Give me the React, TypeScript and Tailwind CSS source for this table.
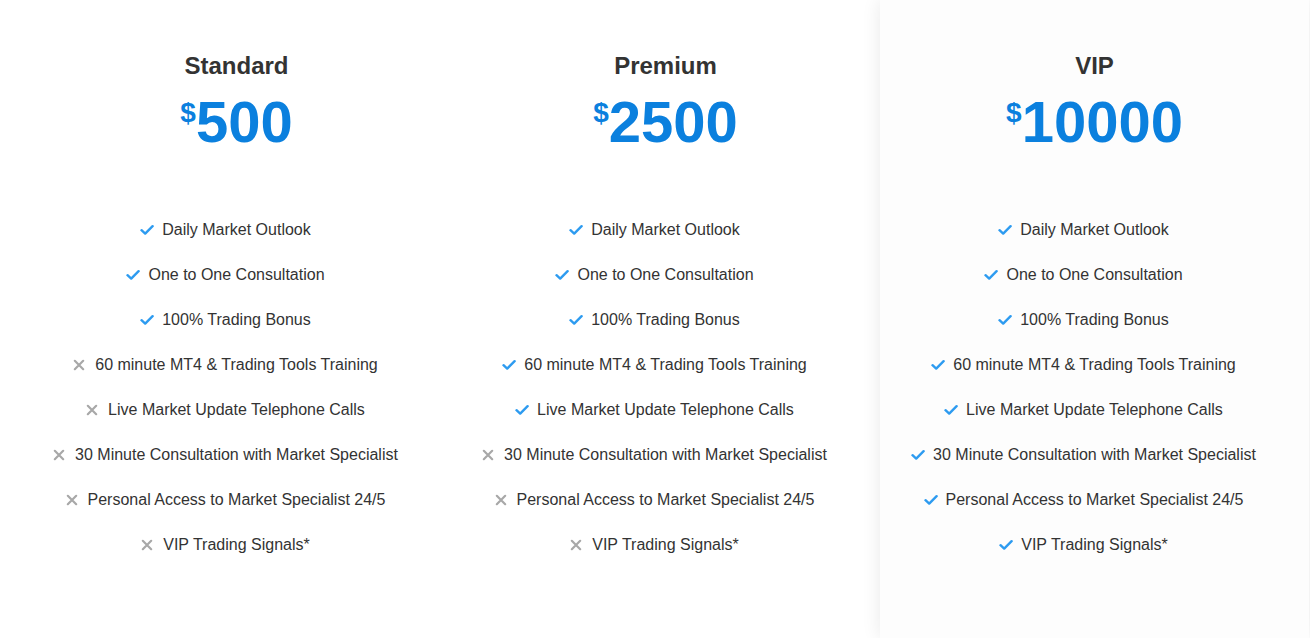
import React from "react";

const features = [
  "Daily Market Outlook",
  "One to One Consultation",
  "100% Trading Bonus",
  "60 minute MT4 & Trading Tools Training",
  "Live Market Update Telephone Calls",
  "30 Minute Consultation with Market Specialist",
  "Personal Access to Market Specialist 24/5",
  "VIP Trading Signals*",
];

const plans = [
  { name: "Standard", price: "500", included: 3, card: false },
  { name: "Premium", price: "2500", included: 5, card: false },
  { name: "VIP", price: "10000", included: 8, card: true },
];

function Check() {
  return (
    <svg width="14" height="14" viewBox="0 0 14 14" className="absolute left-[-22px] top-1/2 -translate-y-1/2">
      <path d="M1.5 7.2 L5.2 10.6 L12.6 3.2" fill="none" stroke="#2d9bf0" strokeWidth="2.4" strokeLinecap="round" strokeLinejoin="round" />
    </svg>
  );
}

function Cross() {
  return (
    <svg width="14" height="14" viewBox="0 0 14 14" className="absolute left-[-23px] top-1/2 -translate-y-1/2">
      <path d="M2.8 2.8 L11.2 11.2 M11.2 2.8 L2.8 11.2" fill="none" stroke="#a8a8a8" strokeWidth="2.2" strokeLinecap="round" />
    </svg>
  );
}

function Plan({ name, price, included, card }: { name: string; price: string; included: number; card: boolean }) {
  return (
    <div
      className={
        "w-[429px] h-[638px] flex flex-col items-center " +
        (card ? "bg-[#fdfdfd] shadow-[0_0_18px_rgba(0,0,0,0.09)]" : "")
      }
    >
      <div className="mt-[52px] text-[24px] leading-[28px] font-bold text-[#333333]">{name}</div>
      <div className="mt-[13px] flex items-start text-[#0b80de] font-bold">
        <span className="mt-[6px] text-[28px] leading-[28px]">$</span>
        <span className="text-[58px] leading-[58px]">{price}</span>
      </div>
      <div className="mt-[56px] flex flex-col items-center">
        {features.map((f, i) => (
          <div key={f} className="h-[45px] flex items-center text-[16px] leading-[45px] text-[#333333]">
            <span className="relative">
              {i < included ? <Check /> : <Cross />}
              {f}
            </span>
          </div>
        ))}
      </div>
    </div>
  );
}

export default function App() {
  return (
    <div
      className="w-[1310px] h-[638px] bg-white overflow-hidden flex pl-[22px]"
      style={{ fontFamily: '"Liberation Sans", Arial, sans-serif' }}
    >
      {plans.map((p) => (
        <Plan key={p.name} {...p} />
      ))}
    </div>
  );
}
